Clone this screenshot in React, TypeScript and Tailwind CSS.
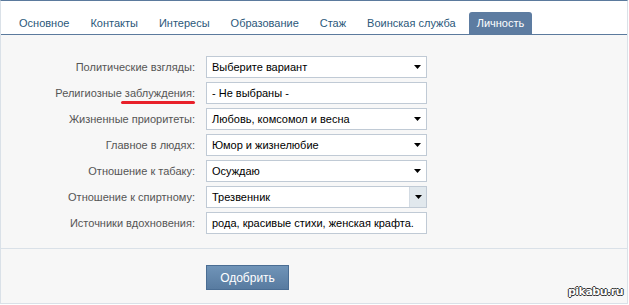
import React from "react";

const tabs = [
  "Основное",
  "Контакты",
  "Интересы",
  "Образование",
  "Стаж",
  "Воинская служба",
  "Личность",
];

type Row = {
  label: string;
  value: string;
  kind: "select" | "input";
  hover?: boolean;
  marked?: boolean;
};

const rows: Row[] = [
  { label: "Политические взгляды:", value: "Выберите вариант", kind: "select" },
  { label: "Религиозные заблуждения:", value: "- Не выбраны -", kind: "input", marked: true },
  { label: "Жизненные приоритеты:", value: "Любовь, комсомол и весна", kind: "select" },
  { label: "Главное в людях:", value: "Юмор и жизнелюбие", kind: "select" },
  { label: "Отношение к табаку:", value: "Осуждаю", kind: "select" },
  { label: "Отношение к спиртному:", value: "Трезвенник", kind: "select", hover: true },
  { label: "Источники вдохновения:", value: "рода, красивые стихи, женская крафта.", kind: "input" },
];

const Arrow = () => (
  <svg width="7" height="4" viewBox="0 0 7 4">
    <path d="M0 0h7L3.5 4z" fill="#000" />
  </svg>
);

const Label = ({ row }: { row: Row }) => {
  if (!row.marked) return <span>{row.label}</span>;
  // red underline under the second word
  return (
    <span>
      Религиозные{" "}
      <span className="relative">
        заблуждения:
        <span className="absolute left-[-4px] right-0 bottom-[-5px] h-[3px] rounded-full bg-[#e8202a]" />
      </span>
    </span>
  );
};

export default function App() {
  return (
    <div className="relative w-[629px] h-[305px] bg-white font-['Liberation_Sans',Arial,sans-serif] text-[11px] overflow-hidden">
      <div className="h-[304px] flex flex-col border-t border-t-[#5b7a9d] border-l border-r border-l-[#dae1e8] border-r-[#dae1e8] border-b border-b-[#dae1e8] w-[628px]">
        {/* tab bar */}
        <div className="h-[34px] flex items-end gap-[5px] pl-[10px] border-b border-b-[#5b7a9d] bg-white">
          {tabs.map((t) => {
            const active = t === "Личность";
            return (
              <div
                key={t}
                className={
                  active
                    ? "h-[22px] px-2 flex items-center rounded-t-[3px] bg-[#5d7ca1] text-white"
                    : "h-[22px] px-2 flex items-center text-[#2b587a]"
                }
              >
                {t}
              </div>
            );
          })}
        </div>

        {/* form */}
        <div className="bg-[#f7f7f7] pt-[21px] pb-[14px] flex flex-col gap-[4px] border-b border-b-[#dae1e8]">
          {rows.map((r) => (
            <div key={r.label} className="flex items-center h-[22px]">
              <div className="w-[194px] text-right text-[#555555]">
                <Label row={r} />
              </div>
              <div className="ml-[11px] w-[221px] h-[22px] bg-white border border-[#c0cad5] flex items-center text-[#000]">
                <span className="flex-1 pl-[5px] whitespace-nowrap overflow-hidden">{r.value}</span>
                {r.kind === "select" &&
                  (r.hover ? (
                    <span className="w-[17px] h-full bg-[#e1e8ed] border-l border-l-[#d3dbe3] flex items-center justify-center">
                      <Arrow />
                    </span>
                  ) : (
                    <span className="w-[17px] h-full flex items-center justify-center">
                      <Arrow />
                    </span>
                  ))}
              </div>
            </div>
          ))}
        </div>

        {/* actions */}
        <div className="flex-1 bg-[#f7f7f7] pt-[16px] pl-[205px]">
          <button className="w-[83px] h-[25px] bg-gradient-to-b from-[#7094b8] to-[#587ba0] border border-[#4a6d93] text-white text-[12px]">
            Одобрить
          </button>
        </div>
      </div>

      <span className="absolute right-[6px] bottom-[5px] font-['DejaVu_Sans',sans-serif] font-bold text-[11px] tracking-[-0.5px] text-white [text-shadow:-1px_0_#333,1px_0_#333,0_-1px_#333,0_1px_#333]">
        pikabu.ru
      </span>
    </div>
  );
}
